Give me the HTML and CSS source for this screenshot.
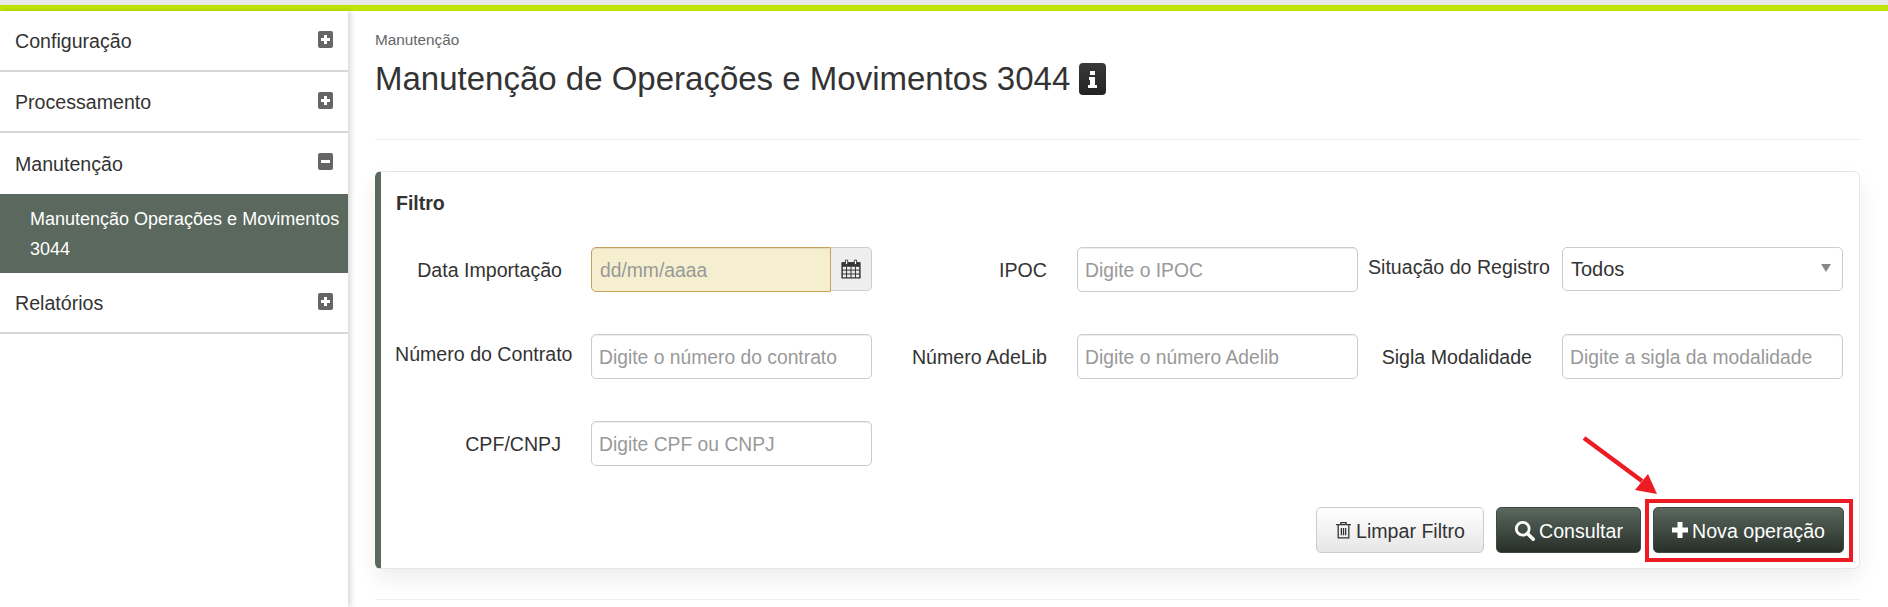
FILE: index.html
```html
<!DOCTYPE html>
<html lang="pt-BR">
<head>
<meta charset="utf-8">
<title>Manutenção de Operações e Movimentos 3044</title>
<link rel="stylesheet" href="styles.css">
</head>
<body>
<div class="topbar"></div>
<div class="layout">
  <nav class="sidebar">
    <div class="nav-item"><span>Configuração</span><span class="toggle"><svg viewBox="0 0 15 17" width="15" height="17"><path d="M6 4h3v3h3v3H9v3H6v-3H3V7h3z" fill="#fff"/></svg></span></div>
    <div class="nav-item"><span>Processamento</span><span class="toggle"><svg viewBox="0 0 15 17" width="15" height="17"><path d="M6 4h3v3h3v3H9v3H6v-3H3V7h3z" fill="#fff"/></svg></span></div>
    <div class="nav-item nav-open"><span>Manutenção</span><span class="toggle"><svg viewBox="0 0 15 17" width="15" height="17"><path d="M3 7h9v3H3z" fill="#fff"/></svg></span></div>
    <div class="nav-sub">Manutenção Operações e Movimentos 3044</div>
    <div class="nav-item"><span>Relatórios</span><span class="toggle"><svg viewBox="0 0 15 17" width="15" height="17"><path d="M6 4h3v3h3v3H9v3H6v-3H3V7h3z" fill="#fff"/></svg></span></div>
  </nav>
  <main class="content">
    <div class="crumb">Manutenção</div>
    <h1 class="title">Manutenção de Operações e Movimentos 3044 <span class="info"><svg viewBox="0 0 27 32" width="27" height="32"><path d="M11 8h5v4h-5zM10 14h6v8h2v3H9v-3h2v-5h-1z" fill="#fff"/></svg></span></h1>
    <hr class="rule">
    <section class="panel">
      <h2 class="panel-title">Filtro</h2>
      <div class="filters">
        <label class="lbl">Data Importação</label>
        <div class="date-group">
          <input class="field field-date" placeholder="dd/mm/aaaa">
          <span class="addon"><svg viewBox="0 0 18 18" width="20" height="20"><path d="M1 3.500h16v13.500H1z" fill="none" stroke="#333" stroke-width="1.300"/><path d="M1 3h16v4H1z" fill="#333"/><path d="M1 10h16M1 13.500h16M5 7v10M9 7v10M13 7v10" stroke="#333" stroke-width=".9"/><path d="M4 1h2v4H4zM12 1h2v4h-2z" fill="#fff" stroke="#333" stroke-width=".8"/></svg></span>
        </div>
        <label class="lbl">IPOC</label>
        <input class="field" placeholder="Digite o IPOC">
        <label class="lbl lbl-third lbl-up">Situação do Registro</label>
        <div class="select-wrap">
          <select class="field field-select"><option>Todos</option></select>
        </div>

        <label class="lbl lbl-up">Número do Contrato</label>
        <input class="field" placeholder="Digite o número do contrato">
        <label class="lbl">Número AdeLib</label>
        <input class="field" placeholder="Digite o número Adelib">
        <label class="lbl lbl-third">Sigla Modalidade</label>
        <input class="field" placeholder="Digite a sigla da modalidade">

        <label class="lbl">CPF/CNPJ</label>
        <input class="field" placeholder="Digite CPF ou CNPJ">
      </div>
      <div class="actions">
        <button class="btn btn-light"><svg viewBox="0 0 16 18" width="17" height="20"><path d="M1 4h14M5.500 4V2h5v2M3 4v12.500h10V4M6 7v7M8 7v7M10 7v7" fill="none" stroke="#333" stroke-width="1.200"/></svg>Limpar Filtro</button>
        <button class="btn btn-dark"><svg viewBox="0 0 18 18" width="21" height="21"><circle cx="7.500" cy="7.500" r="5.500" fill="none" stroke="#fff" stroke-width="2.400"/><path d="M11.500 11.500l5 5" stroke="#fff" stroke-width="3" stroke-linecap="round"/></svg>Consultar</button>
        <button class="btn btn-dark"><svg viewBox="0 0 16 16" width="16" height="16"><path d="M5.500 0h5v5.500H16v5h-5.500V16h-5v-5.500H0v-5h5.500z" fill="#fff"/></svg>Nova operação</button>
      </div>
      <div class="highlight"></div>
      <svg class="arrow" viewBox="0 0 80 64" width="80" height="64"><path d="M2 2L60 45" stroke="#ed1c24" stroke-width="4.500"/><path d="M75 58L53 54L66 38z" fill="#ed1c24"/></svg>
    </section>
    <hr class="rule rule-bottom">
  </main>
</div>
</body>
</html>
```
FILE: styles.css
```css
* { box-sizing: border-box; }
html, body { margin: 0; height: 100%; overflow: hidden; }
body {
  font-family: "Liberation Sans", Arial, sans-serif;
  color: #333;
  background: #fff;
  display: flex;
  flex-direction: column;
  font-size: 19.6px;
}
.topbar {
  height: 11px;
  flex: none;
  background: #bde500;
  border-top: 5px solid #e8e8e8;
}
.layout { flex: 1; display: flex; min-height: 0; }
.sidebar {
  width: 348px;
  flex: none;
  box-shadow: 3px 0 5px rgba(0, 0, 0, .14);
  position: relative;
}
.nav-item {
  height: 61px;
  display: flex;
  align-items: center;
  justify-content: space-between;
  padding: 2px 15px 0;
  border-bottom: 2px solid #d6d6d6;
}
.nav-open { border-bottom: 0; height: 61px; padding-top: 1px; }
.toggle {
  width: 15px;
  height: 17px;
  display: block;
  background: #666;
  border-radius: 2px;
  line-height: 0;
  margin-bottom: 5px;
}
.nav-sub {
  background: #5a685e;
  color: #fff;
  padding: 10px 5px 9px 30px;
  line-height: 30px;
  height: 79px;
  font-size: 18px;
}
.content {
  flex: 1;
  min-width: 0;
  padding: 0 28px 0 27px;
}
.crumb {
  font-size: 15.300px;
  color: #666;
  line-height: 20px;
  margin-top: 19px;
}
.title {
  font-size: 33px;
  font-weight: 400;
  margin: 8px 0 0;
  line-height: 40px;
  height: 41px;
  display: flex;
  align-items: center;
  white-space: pre;
  color: #333;
}
.info {
  width: 27px;
  height: 32px;
  border-radius: 4px;
  background: linear-gradient(#3a3a3a, #222);
  line-height: 0;
  display: block;
}
.rule {
  border: 0;
  border-top: 1px solid #eee;
  margin: 40px 0 0;
  height: 1px;
}
.rule-bottom { margin-top: 30px; }
.panel {
  position: relative;
  margin-top: 31px;
  height: 398px;
  border: 1px solid #e6e6e6;
  border-left: 6px solid #5a685e;
  border-radius: 6px;
  box-shadow: 0 10px 22px rgba(0, 0, 0, .07);
  background: #fff;
  padding: 18px 15px 0 15px;
}
.panel-title {
  font-size: 19.500px;
  font-weight: 700;
  margin: 0;
  line-height: 26px;
  height: 57px;
  color: #333;
}
.filters {
  display: grid;
  grid-template-columns: 195px 281px 205px 281px 204px 281px;
  grid-auto-rows: 45px;
  row-gap: 42px;
  align-items: center;
}
.lbl {
  width: 166px;
  justify-self: end;
  margin-right: 30px;
  text-align: right;
  white-space: nowrap;
  font-size: 19.600px;
  color: #333;
  padding-top: 1px;
}
.lbl:first-child { margin-right: 29px; }
.lbl-third { width: 164px; }
.lbl-up { padding-top: 0; padding-bottom: 4px; }
.field {
  width: 100%;
  height: 45px;
  border: 1px solid #ccc;
  border-radius: 5px;
  padding: 2px 7px 0;
  font: 19.300px "Liberation Sans", Arial, sans-serif;
  color: #333;
  background: #fff;
  box-shadow: inset 0 1px 1px rgba(0, 0, 0, .075);
  outline: 0;
}
.field::placeholder { color: #999; opacity: 1; }
.date-group { display: flex; width: 100%; }
.field-date {
  flex: 1;
  min-width: 0;
  padding-left: 8px;
  background: #f5efcf;
  border-color: #c4a25c;
  border-radius: 5px 0 0 5px;
}
.addon {
  width: 41px;
  flex: none;
  display: flex;
  align-items: center;
  justify-content: center;
  background: #eee;
  border: 1px solid #ccc;
  border-left: 0;
  border-radius: 0 5px 5px 0;
  height: 44px;
}
.select-wrap { position: relative; width: 100%; align-self: start; }
.select-wrap::after {
  content: "";
  position: absolute;
  right: 12px;
  top: 17px;
  border-left: 5px solid transparent;
  border-right: 5px solid transparent;
  border-top: 8px solid #888;
}
.field-select {
  height: 44px;
  appearance: none;
  -webkit-appearance: none;
  box-shadow: none;
  display: block;
  padding: 0 8px;
  font-size: 20px;
}
.actions {
  position: absolute;
  right: 15px;
  top: 335px;
  display: flex;
  gap: 12px;
}
.btn {
  height: 46px;
  border-radius: 5px;
  display: flex;
  align-items: center;
  justify-content: center;
  gap: 4px;
  font: 19.600px "Liberation Sans", Arial, sans-serif;
  padding: 2px 0 0;
}
.btn svg { margin-top: -2px; }
.btn-light {
  width: 168px;
  color: #333;
  border: 1px solid #ccc;
  background: linear-gradient(#fff, #e6e6e6);
}
.btn-dark {
  width: 145px;
  color: #fff;
  border: 1px solid #3d4a41;
  background: linear-gradient(#5a685e, #272f29);
}
.btn-dark:last-child { width: 191px; }
.highlight {
  position: absolute;
  left: 1264px;
  top: 327px;
  width: 208px;
  height: 63px;
  border: 4px solid #ed1c24;
}
.arrow {
  position: absolute;
  left: 1201px;
  top: 264px;
}
```
